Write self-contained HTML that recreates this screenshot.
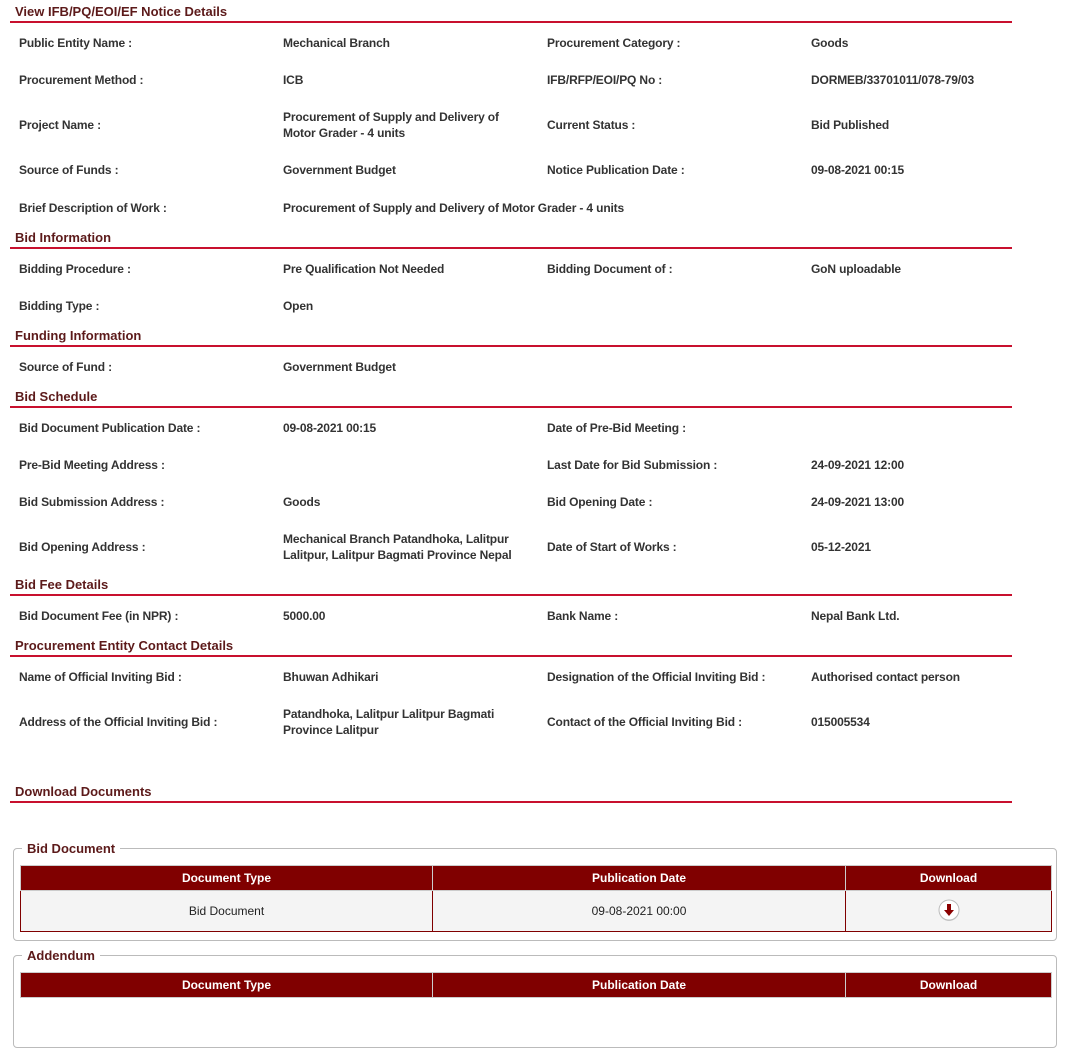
<!DOCTYPE html>
<html><head><meta charset="utf-8"><style>
body{margin:0;width:1074px;height:988px;overflow:hidden;background:#fff;font-family:"Liberation Sans",Arial,sans-serif;position:relative}
.h{position:absolute;left:15px;font-size:13px;font-weight:bold;color:#5c1a1a;line-height:16px;margin-top:1px}
.l{position:absolute;left:10px;width:1002px;height:2px;background:#c8102e}
.t{position:absolute;font-size:12px;font-weight:bold;color:#333;line-height:16px;transform:translateY(-50%);margin-top:1px;letter-spacing:-0.15px}
fieldset{position:absolute;left:13px;width:1044px;border:1px solid #bbb;border-radius:4px;margin:0;padding:0;box-sizing:border-box}
legend{font-size:13px;font-weight:bold;color:#5c1a1a;padding:0 5px;margin-left:8px}
table{position:absolute;left:6px;border-collapse:collapse;width:1032px;font-size:12px}
th{background:#800000;color:#fff;height:24px;border:1px solid #ccc;font-weight:bold;padding:0}
td{background:#f4f4f4;height:40px;border:1px solid #800000;text-align:center;color:#222;padding:0}
</style></head><body>
<div class="h" style="top:3px">View IFB/PQ/EOI/EF Notice Details</div><div class="l" style="top:21px"></div>
<div class="t" style="left:19px;top:42px">Public Entity Name :</div><div class="t" style="left:283px;top:42px">Mechanical Branch</div><div class="t" style="left:547px;top:42px">Procurement Category :</div><div class="t" style="left:811px;top:42px">Goods</div>
<div class="t" style="left:19px;top:79px">Procurement Method :</div><div class="t" style="left:283px;top:79px">ICB</div><div class="t" style="left:547px;top:79px">IFB/RFP/EOI/PQ No :</div><div class="t" style="left:811px;top:79px">DORMEB/33701011/078-79/03</div>
<div class="t" style="left:19px;top:124px">Project Name :</div><div class="t" style="left:283px;top:124px">Procurement of Supply and Delivery of<br>Motor Grader - 4 units</div><div class="t" style="left:547px;top:124px">Current Status :</div><div class="t" style="left:811px;top:124px">Bid Published</div>
<div class="t" style="left:19px;top:169px">Source of Funds :</div><div class="t" style="left:283px;top:169px">Government Budget</div><div class="t" style="left:547px;top:169px">Notice Publication Date :</div><div class="t" style="left:811px;top:169px">09-08-2021 00:15</div>
<div class="t" style="left:19px;top:207px">Brief Description of Work :</div><div class="t" style="left:283px;top:207px">Procurement of Supply and Delivery of Motor Grader - 4 units</div>
<div class="h" style="top:229px">Bid Information</div><div class="l" style="top:247px"></div>
<div class="t" style="left:19px;top:268px">Bidding Procedure :</div><div class="t" style="left:283px;top:268px">Pre Qualification Not Needed</div><div class="t" style="left:547px;top:268px">Bidding Document of :</div><div class="t" style="left:811px;top:268px">GoN uploadable</div>
<div class="t" style="left:19px;top:305px">Bidding Type :</div><div class="t" style="left:283px;top:305px">Open</div>
<div class="h" style="top:327px">Funding Information</div><div class="l" style="top:345px"></div>
<div class="t" style="left:19px;top:366px">Source of Fund :</div><div class="t" style="left:283px;top:366px">Government Budget</div>
<div class="h" style="top:388px">Bid Schedule</div><div class="l" style="top:406px"></div>
<div class="t" style="left:19px;top:427px">Bid Document Publication Date :</div><div class="t" style="left:283px;top:427px">09-08-2021 00:15</div><div class="t" style="left:547px;top:427px">Date of Pre-Bid Meeting :</div>
<div class="t" style="left:19px;top:464px">Pre-Bid Meeting Address :</div><div class="t" style="left:547px;top:464px">Last Date for Bid Submission :</div><div class="t" style="left:811px;top:464px">24-09-2021 12:00</div>
<div class="t" style="left:19px;top:501px">Bid Submission Address :</div><div class="t" style="left:283px;top:501px">Goods</div><div class="t" style="left:547px;top:501px">Bid Opening Date :</div><div class="t" style="left:811px;top:501px">24-09-2021 13:00</div>
<div class="t" style="left:19px;top:546px">Bid Opening Address :</div><div class="t" style="left:283px;top:546px">Mechanical Branch Patandhoka, Lalitpur<br>Lalitpur, Lalitpur Bagmati Province Nepal</div><div class="t" style="left:547px;top:546px">Date of Start of Works :</div><div class="t" style="left:811px;top:546px">05-12-2021</div>
<div class="h" style="top:576px">Bid Fee Details</div><div class="l" style="top:594px"></div>
<div class="t" style="left:19px;top:615px">Bid Document Fee (in NPR) :</div><div class="t" style="left:283px;top:615px">5000.00</div><div class="t" style="left:547px;top:615px">Bank Name :</div><div class="t" style="left:811px;top:615px">Nepal Bank Ltd.</div>
<div class="h" style="top:637px">Procurement Entity Contact Details</div><div class="l" style="top:655px"></div>
<div class="t" style="left:19px;top:676px">Name of Official Inviting Bid :</div><div class="t" style="left:283px;top:676px">Bhuwan Adhikari</div><div class="t" style="left:547px;top:676px">Designation of the Official Inviting Bid :</div><div class="t" style="left:811px;top:676px">Authorised contact person</div>
<div class="t" style="left:19px;top:721px">Address of the Official Inviting Bid :</div><div class="t" style="left:283px;top:721px">Patandhoka, Lalitpur Lalitpur Bagmati<br>Province Lalitpur</div><div class="t" style="left:547px;top:721px">Contact of the Official Inviting Bid :</div><div class="t" style="left:811px;top:721px">015005534</div>
<div class="h" style="top:783px">Download Documents</div><div class="l" style="top:801px"></div>
<fieldset style="top:841px;height:100px"><legend>Bid Document</legend>
<table style="top:9px"><tr><th style="width:411px">Document Type</th><th style="width:412px">Publication Date</th><th>Download</th></tr>
<tr><td>Bid Document</td><td>09-08-2021 00:00</td><td><svg width="26" height="26" viewBox="0 0 26 26"><circle cx="13" cy="14" r="10" fill="#ccc"/><circle cx="13" cy="13" r="10" fill="#fff" stroke="#bbb"/><path d="M11 7h4v6h3l-5 6-5-6h3z" fill="#8b0000"/></svg></td></tr></table>
</fieldset>
<fieldset style="top:948px;height:100px"><legend>Addendum</legend>
<table style="top:9px"><tr><th style="width:411px">Document Type</th><th style="width:412px">Publication Date</th><th>Download</th></tr></table>
</fieldset>
</body></html>
